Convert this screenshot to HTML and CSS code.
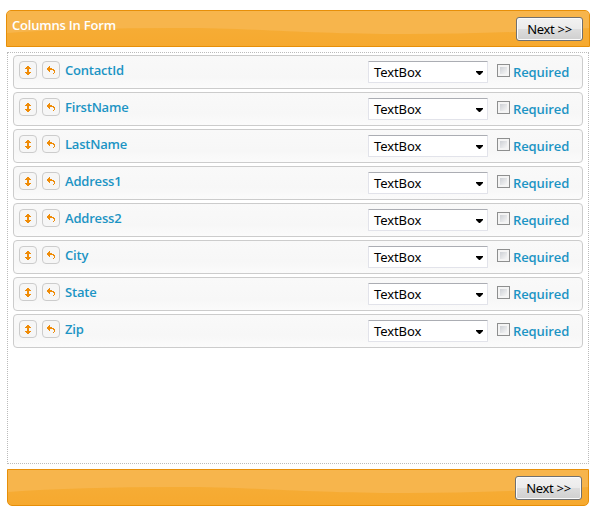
FILE: index.html
```
<!DOCTYPE html>
<html lang="en">
<head>
<meta charset="utf-8">
<title>Columns In Form</title>
<link rel="stylesheet" href="styles.css">
</head>
<body>
<svg class="defs" width="0" height="0" aria-hidden="true">
  <symbol id="move" viewBox="0 0 16 16"><path d="M7 4h2v1h1v1h1v1H9v3h2v1h-1v1H9v1H7v-1H6v-1H5v-1h2V7H5V6h1V5h1z"/></symbol>
  <symbol id="undo" viewBox="0 0 16 16"><path d="M4 6h1V5h1V4h1v2h2v1h2v1h1v3h-1v1h-1v-1h1V9h-1V8H7v2H6V9H5V8H4z"/></symbol>
</svg>
<header class="bar bar-top">
  <svg class="wave" viewBox="0 0 582 35" preserveAspectRatio="none"><path d="M0 0H582V17Q490 23 400 23C300 23 250 17 170 17Q70 17 0 22Z"/></svg>
  <h1 class="title">Columns In Form</h1>
  <button class="next">Next &gt;&gt;</button>
</header>
<main class="columns" id="columns"></main>
<footer class="bar bar-bottom">
  <svg class="wave" viewBox="0 0 582 35" preserveAspectRatio="none"><path d="M0 0H582V17Q490 23 400 23C300 23 250 17 170 17Q70 17 0 22Z"/></svg>
  <button class="next">Next &gt;&gt;</button>
</footer>
<script src="script.js"></script>
</body>
</html>
```
FILE: styles.css
```
* { box-sizing: border-box; }
body {
  margin: 0;
  padding: 10px 7px 0 6px;
  background: #fff;
  font: 600 13px/18px "Open Sans", sans-serif;
  color: #1c94c4;
}
.defs { display: block; height: 0; }
.bar {
  position: relative;
  display: flex;
  width: 584px;
  height: 37px;
  padding: 6px 6px 0 5px;
  border: 1px solid #e78f08;
  background: linear-gradient(#f6af3a, #f6a92f);
  overflow: hidden;
}
.bar-top { border-radius: 5px 5px 0 0; }
.bar-bottom {
  width: 582px;
  margin: 5px 0 0 1px;
  border-radius: 0 0 5px 5px;
}
.wave {
  position: absolute;
  inset: 0;
  width: 100%;
  height: 100%;
  fill: #f7b54c;
}
.title {
  position: relative;
  margin: -1px 0 0;
  font: inherit;
  color: #fff;
  letter-spacing: -0.2px;
}
.next {
  position: relative;
  width: 67px;
  height: 24px;
  margin-left: auto;
  padding: 0;
  border: 1px solid #707070;
  border-radius: 3px;
  background: linear-gradient(#f2f2f2, #ebebeb 50%, #dddddd 50%, #cfcfcf);
  box-shadow: inset 0 0 0 1px #fbfbfb;
  font: 13px/20px "Noto Sans", sans-serif;
  letter-spacing: -0.3px;
  color: #000;
}
.columns {
  display: flex;
  flex-direction: column;
  gap: 3px;
  width: 582px;
  height: 412px;
  margin: 5px 0 0 1px;
  padding: 2px 5px;
  border: 1px dotted #bbb;
}
.row {
  display: flex;
  align-items: flex-start;
  height: 34px;
  flex: none;
  padding: 5px 13px 0 5px;
  border: 1px solid #ccc;
  border-radius: 4px;
  background: linear-gradient(#f9f9f9, #f7f7f7 65%, #fbfbfb);
}
.tool {
  display: grid;
  place-items: center;
  width: 18px;
  height: 18px;
  margin-right: 5px;
  border: 1px solid #ccc;
  border-radius: 4px;
  background: #f6f6f6;
}
.tool svg {
  width: 16px;
  height: 16px;
  fill: #ef8c08;
  shape-rendering: crispEdges;
}
.name { letter-spacing: -0.2px; }
.select {
  display: flex;
  justify-content: space-between;
  align-items: center;
  width: 120px;
  height: 22px;
  margin-left: auto;
  padding: 0 4px 0 5px;
  border: 1px solid #e2e3ea;
  border-top-color: #abadb3;
  border-radius: 1px;
  background: #fff;
  font: 13px/18px "Noto Sans", sans-serif;
  letter-spacing: -0.1px;
  color: #000;
}
.arrow {
  width: 7px;
  height: 4px;
  margin-top: 2px;
  background: #000;
  clip-path: polygon(0 0, 100% 0, 100% 25%, 57% 100%, 43% 100%, 0 25%);
}
.check {
  width: 13px;
  height: 13px;
  margin: 3px 3px 0 9px;
  border: 1px solid #8e8f8f;
  background: linear-gradient(135deg, #cdd0d5, #f6f6f6) content-box, #f4f4f4;
  padding: 2px;
}
.required {
  width: 56px;
  margin-top: 2px;
  letter-spacing: -0.1px;
}
```
FILE: script.js
```
const names = ["ContactId", "FirstName", "LastName", "Address1", "Address2", "City", "State", "Zip"];
document.getElementById("columns").innerHTML = names.map(name => `
  <div class="row">
    <span class="tool"><svg><use href="#move"/></svg></span>
    <span class="tool"><svg><use href="#undo"/></svg></span>
    <span class="name">${name}</span>
    <span class="select">TextBox<i class="arrow"></i></span>
    <span class="check"></span>
    <span class="required">Required</span>
  </div>`).join("");
```
